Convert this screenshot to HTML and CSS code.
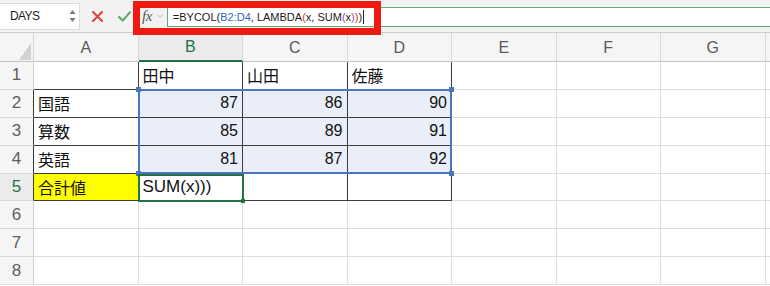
FILE: index.html
```html
<!DOCTYPE html>
<html lang="ja">
<head>
<meta charset="utf-8">
<title>Excel BYCOL</title>
<link rel="stylesheet" href="styles.css">
</head>
<body>
<div class="toolbar">
  <div class="namebox">
    <span class="name">DAYS</span>
    <svg class="spin" width="7" height="14" viewBox="0 0 7 14"><path d="M3.5 1 L6.5 5 L0.5 5 Z M3.5 13 L6.5 9 L0.5 9 Z" fill="#7a7a7a"/></svg>
  </div>
  <svg class="ico cancel" width="11" height="11" viewBox="0 0 11 11"><path d="M1 1 L10 10 M10 1 L1 10" stroke="#e0413a" stroke-width="2" stroke-linecap="round"/></svg>
  <svg class="ico ok" width="13" height="11" viewBox="0 0 13 11"><path d="M1 6 L4.8 9.6 L12 1.2" fill="none" stroke="#58a65c" stroke-width="2" stroke-linecap="round" stroke-linejoin="round"/></svg>
  <span class="fx">fx</span>
  <svg class="chev" width="6" height="4" viewBox="0 0 6 4"><path d="M0.5 0.5 L3 3.3 L5.5 0.5" fill="none" stroke="#b8b8b8" stroke-width="1"/></svg>
  <div class="formula"><span>=BYCOL</span><span>(</span><span class="ref">B2:D4</span><span>, LAMBDA</span><span class="p2">(</span><span>x, SUM</span><span class="p3">(</span><span>x</span><span class="p3">)</span><span class="p2">)</span><span>)</span><span class="caret"></span></div>
</div>
<div class="mark"></div>
<div class="stack">
<div class="sheet">
  <div class="corner"></div>
  <div class="ch">A</div><div class="ch act">B</div><div class="ch">C</div><div class="ch">D</div><div class="ch">E</div><div class="ch">F</div><div class="ch">G</div><div class="ch"></div>

  <div class="rh">1</div>
  <div class="c t"></div><div class="c t">田中</div><div class="c t">山田</div><div class="c t">佐藤</div><div class="c"></div><div class="c"></div><div class="c"></div><div class="c"></div>

  <div class="rh dk">2</div>
  <div class="c t">国語</div><div class="c t n s">87</div><div class="c t n s">86</div><div class="c t n s">90</div><div class="c"></div><div class="c"></div><div class="c"></div><div class="c"></div>

  <div class="rh dk">3</div>
  <div class="c t">算数</div><div class="c t n s">85</div><div class="c t n s">89</div><div class="c t n s">91</div><div class="c"></div><div class="c"></div><div class="c"></div><div class="c"></div>

  <div class="rh dk">4</div>
  <div class="c t">英語</div><div class="c t n s">81</div><div class="c t n s">87</div><div class="c t n s">92</div><div class="c"></div><div class="c"></div><div class="c"></div><div class="c"></div>

  <div class="rh dk act">5</div>
  <div class="c t y">合計値</div><div class="c t edit">SUM(x)))</div><div class="c t"></div><div class="c t"></div><div class="c"></div><div class="c"></div><div class="c"></div><div class="c"></div>

  <div class="rh">6</div>
  <div class="c"></div><div class="c"></div><div class="c"></div><div class="c"></div><div class="c"></div><div class="c"></div><div class="c"></div><div class="c"></div>

  <div class="rh">7</div>
  <div class="c"></div><div class="c"></div><div class="c"></div><div class="c"></div><div class="c"></div><div class="c"></div><div class="c"></div><div class="c"></div>

  <div class="rh">8</div>
  <div class="c"></div><div class="c"></div><div class="c"></div><div class="c"></div><div class="c"></div><div class="c"></div><div class="c"></div><div class="c"></div>
</div>
<div class="sheet overlay">
  <div class="range"><i class="h tl"></i><i class="h tr"></i><i class="h bl"></i><i class="h br"></i></div>
  <div class="active"><i class="h2"></i></div>
</div>
</div>
</body>
</html>
```

FILE: styles.css
```css
* { box-sizing: border-box; }
html, body { margin: 0; padding: 0; }
body {
  width: 770px;
  height: 286px;
  overflow: hidden;
  background: #ffffff;
  font-family: "Liberation Sans", "Noto Sans CJK JP", sans-serif;
  color: #1a1a1a;
  position: relative;
}

/* toolbar */
.toolbar {
  height: 33px;
  display: flex;
  align-items: center;
  background: #f2f2f2;
  border-bottom: 1px solid #cdcdcd;
  box-shadow: 0 1px 1px rgba(0,0,0,0.06);
}
.namebox {
  width: 80px;
  height: 27px;
  background: #ffffff;
  border: 1px solid #dcdcdc;
  border-left: none;
  display: flex;
  align-items: center;
  justify-content: space-between;
  padding: 0 3px 0 10px;
}
.name { font-size: 12px; letter-spacing: -0.6px; color: #1c1c1c; }
.spin { display: block; }
.ico { display: block; flex: none; }
.cancel { margin-left: 12px; }
.ok { margin-left: 15px; }
.fx {
  font-family: "Liberation Serif", serif;
  font-style: italic;
  font-size: 15px;
  color: #555555;
  margin-left: 11px;
  letter-spacing: -0.5px;
}
.chev { display: block; margin-left: 5px; }
.formula {
  flex: 1;
  height: 20px;
  margin-left: 4px;
  margin-top: 2px;
  background: #ffffff;
  border: 1px solid #6aa67c;
  border-right: none;
  display: flex;
  align-items: center;
  padding-left: 5px;
  font-size: 11px;
  color: #1c1c1c;
  white-space: pre;
}
.ref { color: #3467c5; }
.p2 { color: #c4392e; }
.p3 { color: #9b4aa6; }
.caret { width: 1px; height: 14px; background: #222; margin-left: 1px; }

/* annotation box */
.mark {
  position: absolute;
  left: 133px;
  top: 1px;
  width: 248px;
  height: 34px;
  border: 7px solid #f0190f;
  z-index: 2;
}

/* sheet */
.stack { display: grid; }
.stack > .sheet { grid-area: 1 / 1; }
.sheet {
  display: grid;
  grid-template-columns: 34px repeat(7, 104.5px) 1fr;
  grid-template-rows: 29px repeat(8, 27.9px);
}
.overlay { pointer-events: none; }
.corner {
  background-color: #f5f5f5;
  border-right: 1px solid #d6d6d6;
  border-bottom: 1px solid #c4c4c4;
  background-image: linear-gradient(to bottom right, transparent 50%, #d2d2d2 50%);
  background-size: 12px 17px;
  background-position: right 2px bottom 1px;
  background-repeat: no-repeat;
}
.ch {
  background: #f5f5f5;
  border-right: 1px solid #d9d9d9;
  border-bottom: 1px solid #c4c4c4;
  display: flex;
  align-items: center;
  justify-content: center;
  font-size: 16px;
  color: #5a5a5a;
  padding-top: 1px;
}
.ch.act { color: #217346; border-bottom: 2px solid #217346; background: #ebebeb; }
.rh {
  background: #f5f5f5;
  border-right: 1px solid #d0d0d0;
  border-bottom: 1px solid #dadada;
  display: flex;
  align-items: center;
  justify-content: center;
  font-size: 17px;
  color: #5e5e5e;
}
.rh.dk { border-right-color: #3a3a3a; }
.rh.act { color: #217346; background: #ebebeb; }
.c {
  border-right: 1px solid #dedede;
  border-bottom: 1px solid #dedede;
  display: flex;
  align-items: center;
  padding: 0 4px;
  font-size: 16px;
  color: #111111;
  white-space: nowrap;
  overflow: hidden;
}
.c.t { border-right-color: #3c3c3c; border-bottom-color: #3c3c3c; }
.c.n { justify-content: flex-end; padding-right: 4px; }
.c.s { background: #e9eef8; }
.c.y { background: #ffff00; }
.c.edit { font-size: 17px; padding-left: 4px; }

.range {
  grid-column: 3 / 6;
  grid-row: 3 / 6;
  margin: -1px 0 -0.5px -1px;
  border: 2px solid #4a76c0;
  position: relative;
}
.h {
  position: absolute;
  width: 5px;
  height: 5px;
  background: #4a76c0;
}
.h.tl { left: -3.5px; top: -3.5px; }
.h.tr { right: -3.5px; top: -3.5px; }
.h.bl { left: -3.5px; bottom: -3.5px; }
.h.br { right: -3.5px; bottom: -3.5px; }
.active {
  grid-column: 3 / 4;
  grid-row: 6 / 7;
  margin: 0 -1px -1px -1px;
  border: 2px solid #217346;
  position: relative;
}
.h2 {
  position: absolute;
  right: -3px;
  bottom: -3px;
  width: 4px;
  height: 4px;
  background: #217346;
}
```
